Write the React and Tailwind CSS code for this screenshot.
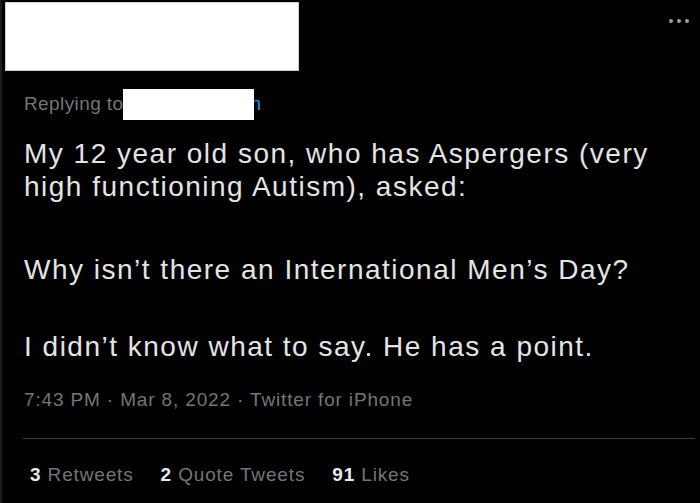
// Tweet detail view, dark theme
const font = { fontFamily: '"Liberation Sans", Arial, sans-serif' };

function MoreDots() {
  return (
    <div className="flex gap-[4px] pt-[19px] pr-[11px]">
      <span className="w-[4px] h-[4px] rounded-full bg-[#9a9a9a]" />
      <span className="w-[4px] h-[4px] rounded-full bg-[#9a9a9a]" />
      <span className="w-[4px] h-[4px] rounded-full bg-[#9a9a9a]" />
    </div>
  );
}

function Stat({ count, label }) {
  return (
    <span>
      <span className="font-bold text-[#e7e9ea]">{count}</span>{' '}
      <span className="text-[#71767b]">{label}</span>
    </span>
  );
}

export default function App() {
  return (
    <div
      className="w-[700px] h-[503px] overflow-hidden bg-black border-l-2 border-[#1c1c1c]"
      style={font}
    >
      {/* header: redacted name + menu */}
      <div className="flex justify-between">
        <div className="ml-[3px] mt-[2px] w-[294px] h-[69px] bg-white border border-[#cfcfcf]" />
        <MoreDots />
      </div>

      {/* replying to */}
      <div className="mt-[18px] ml-[22px] h-[31px] flex items-center text-[19px] tracking-[0.4px] text-[#71767b]">
        <span>Replying to</span>
        <span className="relative z-10 w-[131px] h-[31px] bg-white" />
        <span className="-ml-[4px] text-[#1d9bf0]">n</span>
      </div>

      {/* tweet text */}
      <div className="ml-[22px] max-w-[660px] text-[28px] leading-[33px] tracking-[1.5px] text-[#e4e4e4]">
        <p className="mt-[17px]">
          My 12 year old son, who has Aspergers (very high functioning Autism), asked:
        </p>
        <p className="mt-[50px]">Why isn’t there an International Men’s Day?</p>
        <p className="mt-[44px]">I didn’t know what to say. He has a point.</p>
      </div>

      {/* timestamp */}
      <div className="mt-[25px] ml-[22px] text-[19px] leading-[24px] tracking-[0.85px] text-[#71767b]">
        7:43 PM · Mar 8, 2022 · Twitter for iPhone
      </div>

      <div className="mt-[26px] ml-[21px] mr-[5px] h-px bg-[#3a3d41]" />

      {/* engagement */}
      <div className="mt-[24px] ml-[28px] flex gap-[27px] text-[19px] leading-[24px] tracking-[0.85px]">
        <Stat count="3" label="Retweets" />
        <Stat count="2" label="Quote Tweets" />
        <Stat count="91" label="Likes" />
      </div>
    </div>
  );
}
